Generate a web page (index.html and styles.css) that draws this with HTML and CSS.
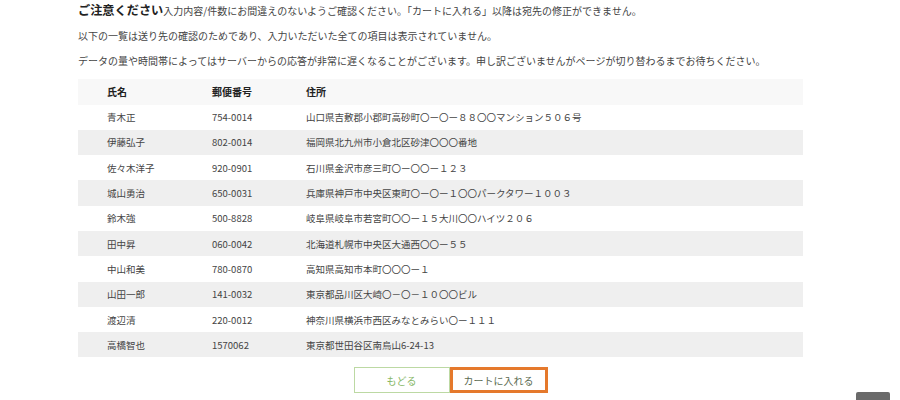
FILE: index.html
```html
<!DOCTYPE html>
<html lang="ja">
<head>
<meta charset="utf-8">
<link rel="stylesheet" href="styles.css">
</head>
<body>
<div class="page">
  <div class="notes">
    <p class="note"><strong class="caution">ご注意ください</strong>入力内容/件数にお間違えのないようご確認ください。「カートに入れる」以降は宛先の修正ができません。</p>
    <p class="note">以下の一覧は送り先の確認のためであり、入力いただいた全ての項目は表示されていません。</p>
    <p class="note">データの量や時間帯によってはサーバーからの応答が非常に遅くなることがございます。申し訳ございませんがページが切り替わるまでお待ちください。</p>
  </div>
  <table class="list">
    <colgroup><col class="c-name"><col class="c-zip"><col class="c-addr"></colgroup>
    <thead>
      <tr><th>氏名</th><th>郵便番号</th><th>住所</th></tr>
    </thead>
    <tbody>
      <tr><td>青木正</td><td>754-0014</td><td>山口県吉敷郡小郡町高砂町〇ー〇ー８８〇〇マンション５０６号</td></tr>
      <tr><td>伊藤弘子</td><td>802-0014</td><td>福岡県北九州市小倉北区砂津〇〇〇番地</td></tr>
      <tr><td>佐々木洋子</td><td>920-0901</td><td>石川県金沢市彦三町〇ー〇〇ー１２３</td></tr>
      <tr><td>城山勇治</td><td>650-0031</td><td>兵庫県神戸市中央区東町〇ー〇ー１〇〇パークタワー１００３</td></tr>
      <tr><td>鈴木強</td><td>500-8828</td><td>岐阜県岐阜市若宮町〇〇ー１５大川〇〇ハイツ２０６</td></tr>
      <tr><td>田中昇</td><td>060-0042</td><td>北海道札幌市中央区大通西〇〇ー５５</td></tr>
      <tr><td>中山和美</td><td>780-0870</td><td>高知県高知市本町〇〇〇ー１</td></tr>
      <tr><td>山田一郎</td><td>141-0032</td><td>東京都品川区大崎〇－〇－１０〇〇ビル</td></tr>
      <tr><td>渡辺清</td><td>220-0012</td><td>神奈川県横浜市西区みなとみらい〇ー１１１</td></tr>
      <tr><td>高橋智也</td><td>1570062</td><td>東京都世田谷区南烏山6-24-13</td></tr>
    </tbody>
  </table>
</div>
<div class="actions">
  <button class="btn btn-back" type="button">もどる</button>
  <button class="btn btn-cart" type="button">カートに入れる</button>
</div>
<div class="pagetop"></div>
</body>
</html>
```

FILE: styles.css
```css
html, body {
  margin: 0;
  padding: 0;
  background: #fff;
}
body {
  font-family: "Noto Sans CJK JP", "Noto Sans", sans-serif;
  color: #444;
  font-size: 10px;
  width: 900px;
  height: 400px;
  overflow: hidden;
  position: relative;
}
.page {
  margin-left: 78px;
  width: 725px;
}
.notes {
  padding-top: 1px;
}
.note {
  margin: 0;
  height: 25.5px;
  line-height: 18px;
  font-size: 10px;
  color: #444;
}
.caution {
  font-size: 12.2px;
  font-weight: bold;
  color: #222;
}
.list {
  margin-top: 1px;
  width: 725px;
  border-collapse: collapse;
  table-layout: fixed;
}
.c-name { width: 105px; }
.c-zip { width: 94px; }
.list th,
.list td {
  text-align: left;
  padding: 0 0 0 29px;
  white-space: nowrap;
}
.list th {
  height: 26px;
  font-size: 10px;
  font-weight: bold;
  color: #222;
  background: #f8f8f8;
}
.list td {
  height: 25.3px;
  font-size: 9.5px;
  color: #444;
}
.list tbody tr:nth-child(even) td {
  background: #efefef;
}
.actions {
  display: flex;
  justify-content: center;
  margin-top: 10px;
  padding-left: 1px;
}
.btn {
  box-sizing: border-box;
  height: 26px;
  background: #fff;
  font-family: "Noto Sans CJK JP", "Noto Sans", sans-serif;
  font-size: 10px;
  cursor: pointer;
  padding: 0;
}
.btn-back {
  width: 96px;
  border: 1px solid #bcd9a3;
  color: #86b766;
}
.btn-cart {
  width: 98px;
  border: 3px solid #e5792c;
  color: #5b6b52;
}
.pagetop {
  position: absolute;
  left: 856px;
  top: 392px;
  width: 34px;
  height: 12px;
  background: #6a6a6a;
  border-radius: 2px;
}
```
